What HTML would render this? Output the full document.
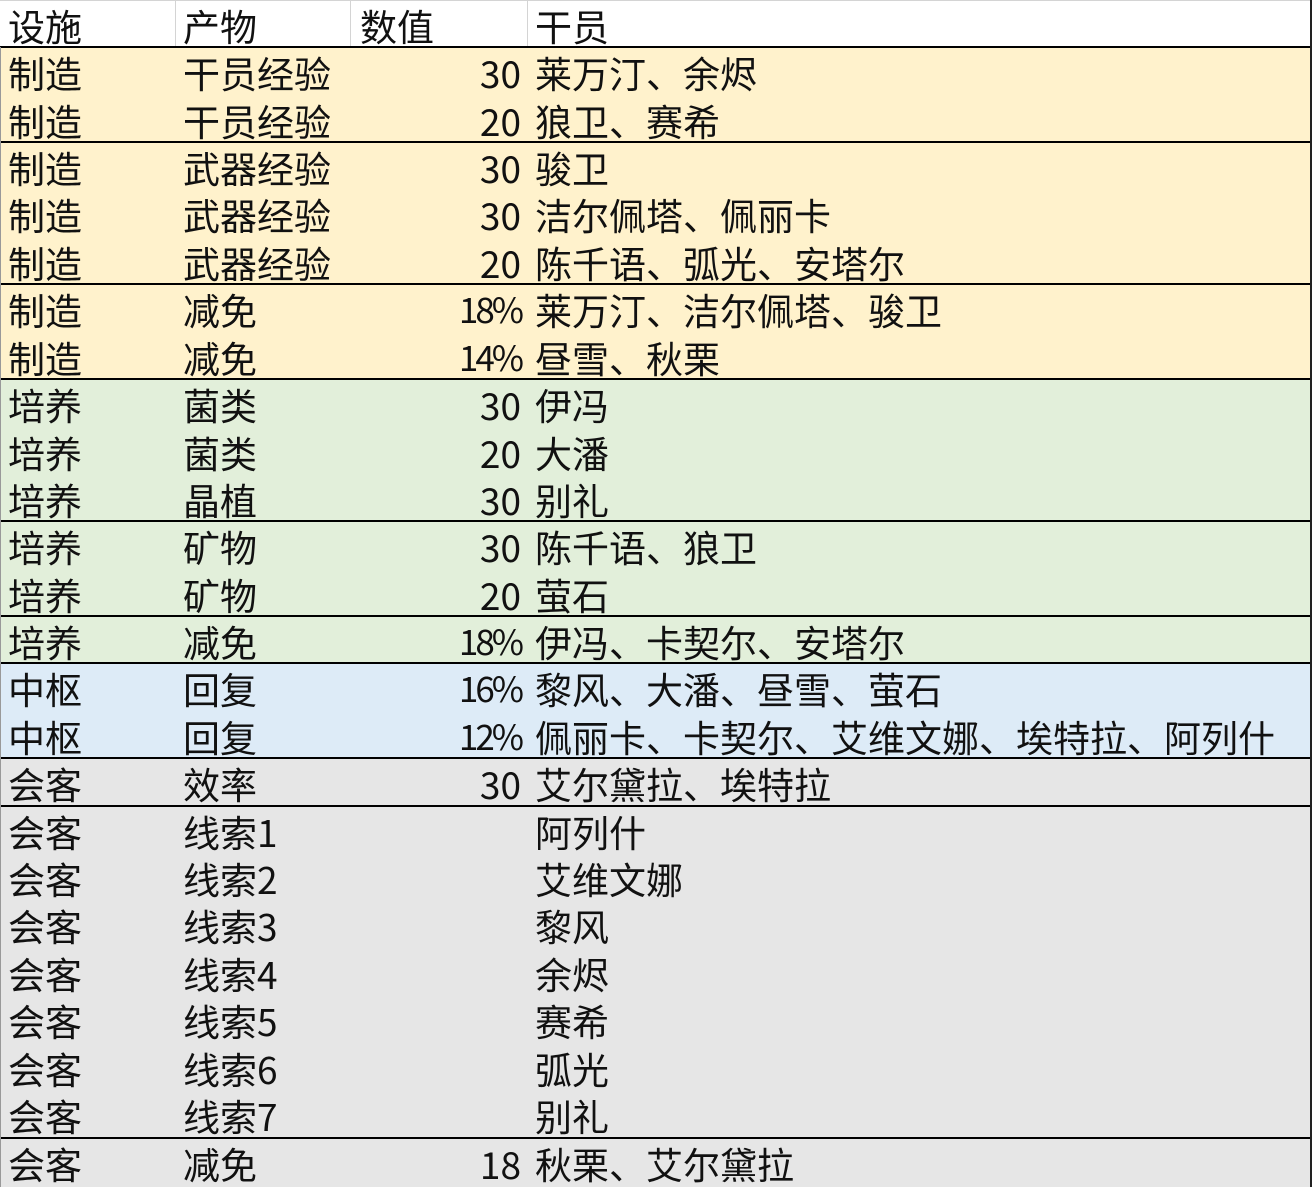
<!DOCTYPE html>
<html><head><meta charset="utf-8"><style>
body{margin:0;width:1312px;height:1187px;background:#fff;position:relative;overflow:hidden;font-family:"Noto Sans CJK SC","Liberation Sans",sans-serif;font-size:37px;color:#111}
.r{position:absolute;left:0;width:1310px;height:48px;line-height:48px}
.r span{position:absolute;top:1px;white-space:nowrap}
.a{left:8px}.b{left:183px}.c{right:789px;text-align:right}.d{left:535px}
.p{letter-spacing:-3px;font-size:35px}
.y{background:#fff2cc}.g{background:#e2efda}.bl{background:#ddebf7}.gr{background:#e6e6e6}
.ln{position:absolute;left:0;width:1311px;height:2px;background:#000}
.vr{position:absolute;top:0;height:47px;width:1px;background:#d4d4d4}
</style></head><body>
<div style="position:absolute;left:0;top:0;width:1312px;height:1px;background:#d4d4d4"></div>
<div class="r" style="top:0"><span class="a">设施</span><span class="b">产物</span><span style="left:360px;position:absolute;top:1px">数值</span><span class="d">干员</span></div>
<div class="vr" style="left:175px"></div><div class="vr" style="left:350px"></div><div class="vr" style="left:527px"></div>
<div class="r y" style="top:47px"><span class="a">制造</span><span class="b">干员经验</span><span class="c">30</span><span class="d">莱万汀、余烬</span></div>
<div class="r y" style="top:95px"><span class="a">制造</span><span class="b">干员经验</span><span class="c">20</span><span class="d">狼卫、赛希</span></div>
<div class="r y" style="top:142px"><span class="a">制造</span><span class="b">武器经验</span><span class="c">30</span><span class="d">骏卫</span></div>
<div class="r y" style="top:189px"><span class="a">制造</span><span class="b">武器经验</span><span class="c">30</span><span class="d">洁尔佩塔、佩丽卡</span></div>
<div class="r y" style="top:237px"><span class="a">制造</span><span class="b">武器经验</span><span class="c">20</span><span class="d">陈千语、弧光、安塔尔</span></div>
<div class="r y" style="top:284px"><span class="a">制造</span><span class="b">减免</span><span class="c p">18%</span><span class="d">莱万汀、洁尔佩塔、骏卫</span></div>
<div class="r y" style="top:332px"><span class="a">制造</span><span class="b">减免</span><span class="c p">14%</span><span class="d">昼雪、秋栗</span></div>
<div class="r g" style="top:379px"><span class="a">培养</span><span class="b">菌类</span><span class="c">30</span><span class="d">伊冯</span></div>
<div class="r g" style="top:427px"><span class="a">培养</span><span class="b">菌类</span><span class="c">20</span><span class="d">大潘</span></div>
<div class="r g" style="top:474px"><span class="a">培养</span><span class="b">晶植</span><span class="c">30</span><span class="d">别礼</span></div>
<div class="r g" style="top:521px"><span class="a">培养</span><span class="b">矿物</span><span class="c">30</span><span class="d">陈千语、狼卫</span></div>
<div class="r g" style="top:569px"><span class="a">培养</span><span class="b">矿物</span><span class="c">20</span><span class="d">萤石</span></div>
<div class="r g" style="top:616px"><span class="a">培养</span><span class="b">减免</span><span class="c p">18%</span><span class="d">伊冯、卡契尔、安塔尔</span></div>
<div class="r bl" style="top:663px"><span class="a">中枢</span><span class="b">回复</span><span class="c p">16%</span><span class="d">黎风、大潘、昼雪、萤石</span></div>
<div class="r bl" style="top:711px"><span class="a">中枢</span><span class="b">回复</span><span class="c p">12%</span><span class="d">佩丽卡、卡契尔、艾维文娜、埃特拉、阿列什</span></div>
<div class="r gr" style="top:758px"><span class="a">会客</span><span class="b">效率</span><span class="c">30</span><span class="d">艾尔黛拉、埃特拉</span></div>
<div class="r gr" style="top:806px"><span class="a">会客</span><span class="b">线索1</span><span class="d">阿列什</span></div>
<div class="r gr" style="top:853px"><span class="a">会客</span><span class="b">线索2</span><span class="d">艾维文娜</span></div>
<div class="r gr" style="top:900px"><span class="a">会客</span><span class="b">线索3</span><span class="d">黎风</span></div>
<div class="r gr" style="top:948px"><span class="a">会客</span><span class="b">线索4</span><span class="d">余烬</span></div>
<div class="r gr" style="top:995px"><span class="a">会客</span><span class="b">线索5</span><span class="d">赛希</span></div>
<div class="r gr" style="top:1043px"><span class="a">会客</span><span class="b">线索6</span><span class="d">弧光</span></div>
<div class="r gr" style="top:1090px"><span class="a">会客</span><span class="b">线索7</span><span class="d">别礼</span></div>
<div class="r gr" style="top:1138px;height:49px"><span class="a">会客</span><span class="b">减免</span><span class="c">18</span><span class="d">秋栗、艾尔黛拉</span></div>
<div class="ln" style="top:46px"></div>
<div class="ln" style="top:141px"></div>
<div class="ln" style="top:283px"></div>
<div class="ln" style="top:378px"></div>
<div class="ln" style="top:520px"></div>
<div class="ln" style="top:615px"></div>
<div class="ln" style="top:662px"></div>
<div class="ln" style="top:757px"></div>
<div class="ln" style="top:805px"></div>
<div class="ln" style="top:1137px"></div>
<div style="position:absolute;left:1310px;top:0;width:2px;height:1187px;background:#222"></div>
<div style="position:absolute;left:0;top:47px;width:1px;height:1140px;background:#999"></div>
</body></html>
